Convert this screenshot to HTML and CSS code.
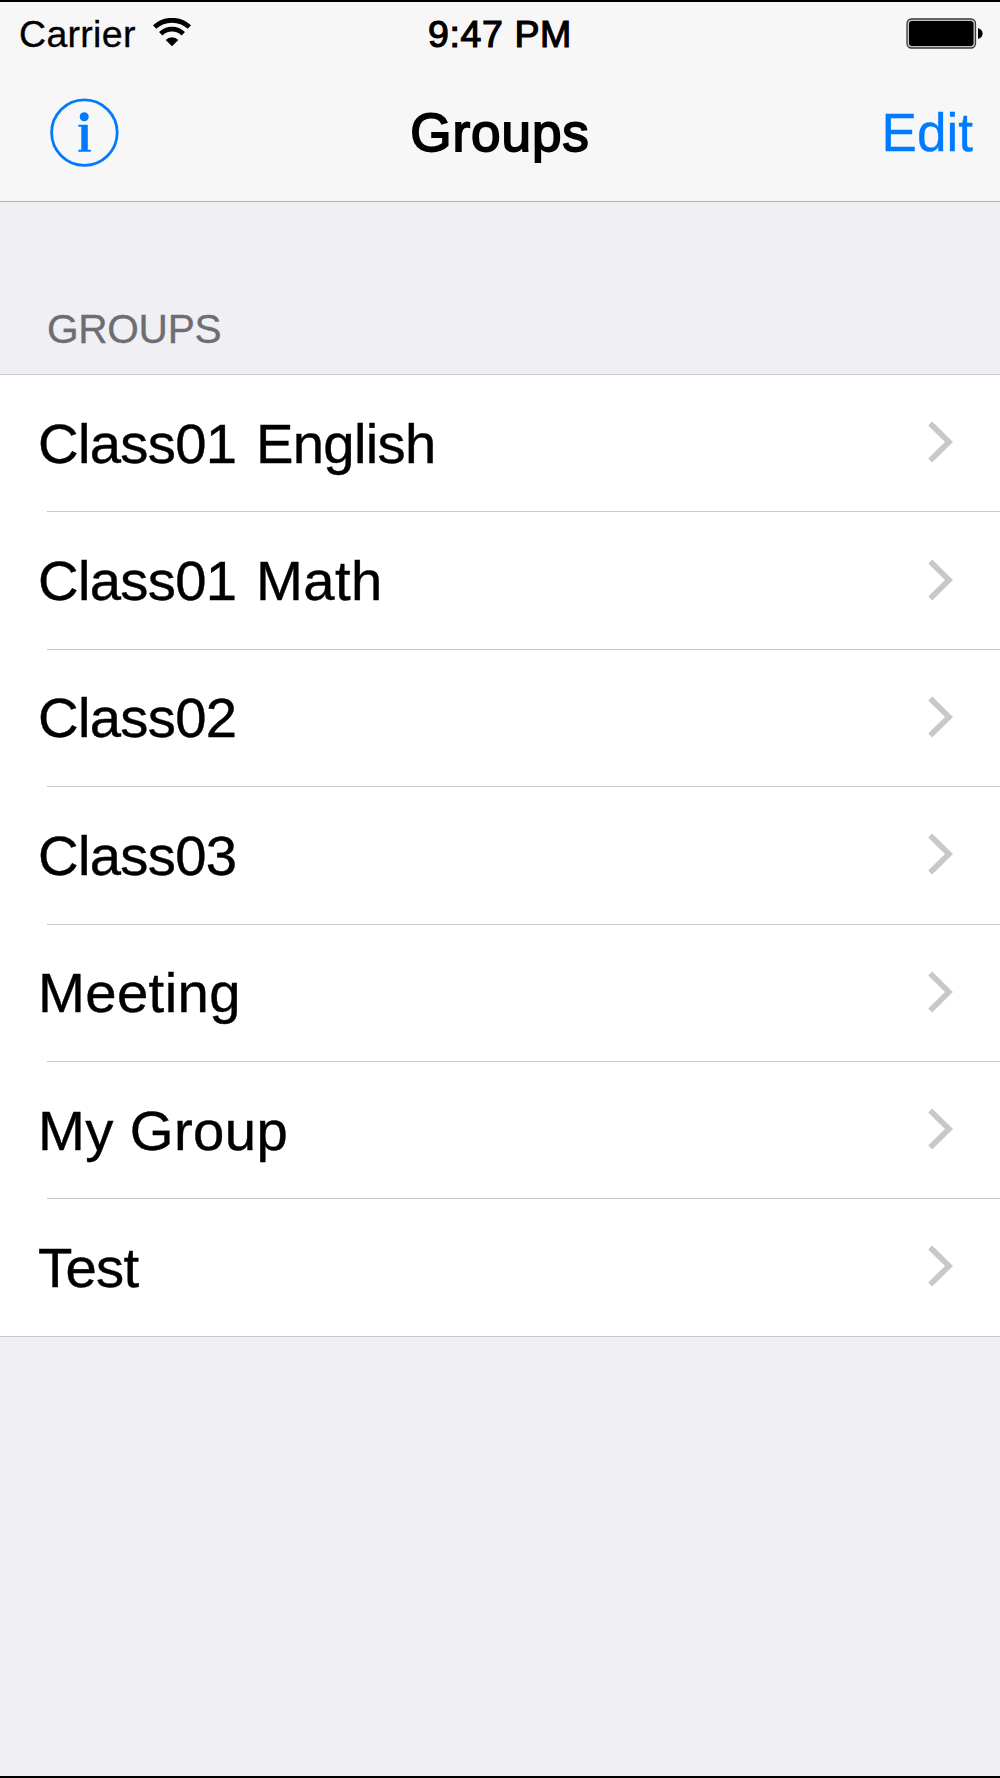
FILE: index.html
```html
<!DOCTYPE html>
<html lang="en">
<head>
<meta charset="utf-8">
<title>Groups</title>
<link rel="stylesheet" href="styles.css">
</head>
<body>
<svg class="defs" width="0" height="0" aria-hidden="true">
  <symbol id="chevron" viewBox="0 0 26 42"><path d="M2.2 2.4 21 21 2.2 39.6" fill="none" stroke="#c7c7cc" stroke-width="5.6"/></symbol>
</svg>
<div class="screen">
  <header class="top">
    <div class="status">
      <div class="carrier">
        <span class="carrier-name">Carrier</span>
        <svg class="wifi" width="40" height="30" viewBox="0 0 40 30">
          <g fill="none" stroke="#000" stroke-width="4.8">
            <path d="M2.6 9.1A25.5 25.5 0 0 1 37.4 9.1"/>
            <path d="M8.7 15.7A16.4 16.4 0 0 1 31.3 15.7"/>
          </g>
          <path d="M20 28.3 13.7 21.9A9 9 0 0 1 26.3 21.9Z"/>
        </svg>
      </div>
      <span class="time">9:47 PM</span>
      <svg class="battery" width="78" height="32" viewBox="0 0 78 32">
        <rect x="1" y="1" width="68.5" height="29" rx="4.5" fill="#c4c4c4" stroke="#3c3c3c" stroke-width="1.3"/>
        <rect x="3" y="3" width="64.5" height="25" rx="3" fill="#000"/>
        <path d="M72 10Q76.6 11.5 76.6 15.5T72 21Z"/>
      </svg>
    </div>
    <nav class="nav">
      <svg class="info" width="70" height="70" viewBox="0 0 70 70">
        <circle cx="35.4" cy="34.6" r="32.8" fill="none" stroke="#007aff" stroke-width="2.8"/>
        <circle cx="35.2" cy="18.8" r="4.5" fill="#007aff"/>
        <path d="M29.3 26.8H38.8V51.8H41.8V53.8H29.3V51.8H32.3V28.8H29.3Z" fill="#007aff"/>
      </svg>
      <h1 class="title">Groups</h1>
      <a class="edit">Edit</a>
    </nav>
  </header>
  <main>
    <h2 class="section">GROUPS</h2>
    <ul class="list">
      <li class="row"><span class="name"><span class="tight">Class01</span> <span class="tight push">English</span></span><svg class="chevron"><use href="#chevron"/></svg></li>
      <li class="row"><span class="name"><span class="tight">Class01</span> <span class="loose push">Math</span></span><svg class="chevron"><use href="#chevron"/></svg></li>
      <li class="row"><span class="name tight">Class02</span><svg class="chevron"><use href="#chevron"/></svg></li>
      <li class="row"><span class="name tight">Class03</span><svg class="chevron"><use href="#chevron"/></svg></li>
      <li class="row"><span class="name loose">Meeting</span><svg class="chevron"><use href="#chevron"/></svg></li>
      <li class="row"><span class="name loose">My Group</span><svg class="chevron"><use href="#chevron"/></svg></li>
      <li class="row"><span class="name tight">Test</span><svg class="chevron"><use href="#chevron"/></svg></li>
    </ul>
  </main>
</div>
</body>
</html>
```
FILE: styles.css
```css
* { box-sizing: border-box; }
body { margin: 0; font-family: "Liberation Sans", Arial, sans-serif; color: #000; }
.defs { display: block; }
.screen {
  width: 1000px;
  height: 1778px;
  background: #efeff4;
  border-top: 2px solid #000;
  border-bottom: 2px solid #000;
  overflow: hidden;
}
.top { height: 200px; background: #f7f7f7; border-bottom: 1px solid #b2b2b2; }
.status {
  display: grid;
  grid-template-columns: 1fr auto 1fr;
  align-items: center;
  height: 62px;
  padding: 2px 17px 0 19px;
  font-size: 37.5px;
  line-height: 44px;
}
.carrier { display: flex; align-items: center; gap: 16.5px; }
.carrier-name { letter-spacing: 0.3px; -webkit-text-stroke: 0.3px #000; }
.wifi { margin-top: -2px; }
.time { margin-right: 2px; letter-spacing: 0.6px; -webkit-text-stroke: 1.2px #000; }
.battery { justify-self: end; margin-right: -1px; }
.nav {
  display: grid;
  grid-template-columns: 1fr auto 1fr;
  align-items: center;
  height: 137px;
  padding: 1px 27px 0 49px;
  font-size: 53.125px;
  line-height: 60px;
}
.title {
  margin: 0 22px 0 0;
  font-size: inherit;
  font-weight: 400;
  letter-spacing: 0.9px;
  -webkit-text-stroke: 1.8px #000;
}
.edit { justify-self: end; color: #007aff; -webkit-text-stroke: 0.3px #007aff; }
.section {
  height: 172px;
  margin: 0;
  padding: 104px 0 0 47px;
  font-size: 40.625px;
  font-weight: 400;
  letter-spacing: -0.3px;
  line-height: 46px;
  color: #6d6d72;
  -webkit-text-stroke: 0.3px #6d6d72;
}
.list {
  margin: 0;
  padding: 0;
  list-style: none;
  background: #fff;
  border-top: 1px solid #c8c7cc;
  border-bottom: 1px solid #c8c7cc;
}
.row {
  display: flex;
  justify-content: space-between;
  align-items: center;
  height: 137.4px;
  padding: 0 46px 0 38px;
  font-size: 56.25px;
  line-height: 64px;
  background: linear-gradient(#c8c7cc, #c8c7cc) 47px 100% / 953px 1px no-repeat;
}
.row:last-child { height: 136.6px; background: none; }
.name { -webkit-text-stroke: 0.4px #000; }
.tight { letter-spacing: -0.7px; }
.loose { letter-spacing: 0.4px; }
.push { margin-left: 4px; }
.chevron { width: 26px; height: 42px; margin-top: -3px; }
```
